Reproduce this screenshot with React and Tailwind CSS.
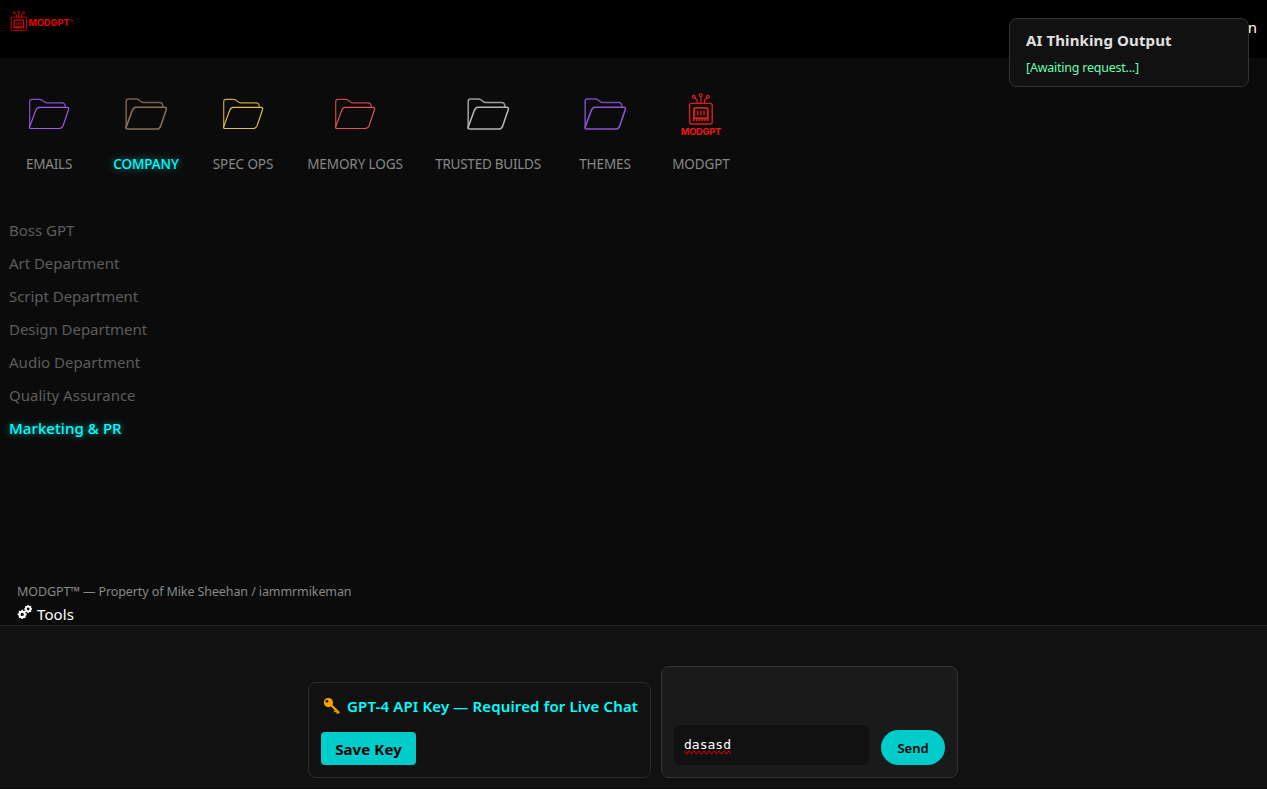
function Folder({ color, bold }) {
  return (
    <svg
      className="size-16 shrink-0"
      viewBox={bold ? '1.1 0.9 62 62' : '0.2 0 64 64'}
      fill="none"
      stroke={color}
      strokeWidth={bold ? 1.5 : 1.2}
      strokeLinejoin="round"
    >
      <path d="M12.9 45.5V19.6Q12.9 17.3 15.2 17.3H22.6Q24.2 17.3 25.2 18.1L27.3 19.8Q28.4 20.8 29.8 20.8H45.4Q48.4 20.8 48.4 24.8" opacity="0.85" />
      <path d="M12.9 44.6L18.8 28.6Q20 25.4 22.4 25.4H50.2Q52.4 25.4 51.7 27.7L46.4 43.4Q45.2 46.5 42.6 46.5H14.4Q12.2 46.5 12.9 44.6Z" />
    </svg>
  );
}

function RobotShapes() {
  return (
    <>
      <rect x="0.8" y="10.8" width="22.6" height="20.6" rx="2" strokeWidth="1.4" />
      <path d="M12 10.5V4.6M8.4 10.5V7.4L5.8 5.1M15.8 10.5V7.4L18.3 5.1" strokeWidth="1.3" />
      <circle cx="12" cy="2.7" r="1.5" strokeWidth="1.2" />
      <circle cx="5" cy="4.2" r="1.4" strokeWidth="1.2" />
      <circle cx="19" cy="4.2" r="1.4" strokeWidth="1.2" />
      <rect x="5.2" y="15.3" width="13.8" height="10.4" rx="1" strokeWidth="1.9" />
      <path d="M9 18.2V22.8M12.1 18.2V22.8M15.2 18.2V22.8" strokeWidth="1.4" />
      <path d="M5 28.4V25.5M7.9 28.4V25.5M10.7 28.4V25.5M13.5 28.4V25.5M16.3 28.4V25.5M19.1 28.4V25.5" strokeWidth="1.7" />
    </>
  );
}

function Gear({ x, y, s }) {
  return (
    <g transform={`translate(${x} ${y}) scale(${s})`}>
      <circle r="3" fill="none" stroke="#fff" strokeWidth="2.3" />
      <path
        d="M0-3.5V-5.2M0 3.5V5.2M-3.5 0H-5.2M3.5 0H5.2M2.5-2.5L3.6-3.6M-2.5-2.5L-3.6-3.6M2.5 2.5L3.6 3.6M-2.5 2.5L-3.6 3.6"
        stroke="#fff"
        strokeWidth="2"
      />
    </g>
  );
}

const tabs = [
  { label: 'EMAILS', color: '#a259ec', width: 'w-16', tracking: 'tracking-[-0.2px]' },
  { label: 'COMPANY', color: '#8d7052', bold: true, width: 'w-[66px]', tracking: 'tracking-[-0.1px]', active: true },
  { label: 'SPEC OPS', color: '#e6bd4e', width: 'w-16', tracking: 'tracking-[-0.1px]' },
  { label: 'MEMORY LOGS', color: '#e65353', width: 'w-24', tracking: 'tracking-[-0.1px]' },
  { label: 'TRUSTED BUILDS', color: '#b5b5b5', bold: true, width: 'w-[106px]', tracking: 'tracking-[-0.25px]' },
  { label: 'THEMES', color: '#8a56d6', bold: true, width: 'w-16', tracking: 'tracking-[-0.1px]' },
  { label: 'MODGPT', robot: true, width: 'w-16', tracking: 'tracking-[-0.1px]' },
];

const departments = [
  { name: 'Boss GPT', tracking: 'tracking-[0px]' },
  { name: 'Art Department', tracking: 'tracking-[-0.04px]' },
  { name: 'Script Department', tracking: 'tracking-[-0.04px]' },
  { name: 'Design Department', tracking: 'tracking-[-0.04px]' },
  { name: 'Audio Department', tracking: 'tracking-[0.03px]' },
  { name: 'Quality Assurance', tracking: 'tracking-[0px]' },
  { name: 'Marketing & PR', tracking: 'tracking-[0.07px]', active: true },
];

export default function App() {
  return (
    <div className="relative flex h-[789px] w-[1267px] flex-col overflow-hidden bg-[#0b0b0b] font-['Noto_Sans',sans-serif] text-white">
      <header className="flex h-[58px] shrink-0 items-start justify-between bg-black px-2.5">
        <div className="flex pt-[10px]">
          <svg className="h-[21px] w-[17px]" viewBox="-1 0 25 32" preserveAspectRatio="none" fill="none" stroke="#dd0000">
            <RobotShapes />
          </svg>
          <span className="ml-[1.5px] pt-[6px] font-['Inter',sans-serif] text-[9px] leading-[12px] font-bold tracking-[0.1px] text-[#f00000]">
            MODGPT<span className="align-[2px] text-[5px]">™</span>
          </span>
        </div>
        <span className="pt-[15px] text-[15px] leading-6">Login</span>
      </header>

      <nav className="flex shrink-0 gap-8 pt-6 pl-[17px]">
        {tabs.map((t) => (
          <div key={t.label} className={`flex shrink-0 flex-col items-center ${t.width}`}>
            {t.robot ? (
              <svg className="size-16" viewBox="0 0 64 64" fill="none" stroke="#dc1c1c">
                <g transform="translate(19.8 10.6)">
                  <RobotShapes />
                </g>
                <text x="32" y="53" textAnchor="middle" textLength="40.5" fill="#ee1818" stroke="none" className="font-['Inter',sans-serif] text-[9.4px] font-bold">
                  MODGPT
                </text>
              </svg>
            ) : (
              <Folder color={t.color} bold={t.bold} />
            )}
            <span
              className={`mt-2 text-[13.5px] leading-5 whitespace-nowrap ${t.tracking} ${
                t.active ? 'font-medium text-[#00ffff] [text-shadow:0_0_8px_#00ffff99]' : 'text-[#888888]'
              }`}
            >
              {t.label}
            </span>
          </div>
        ))}
      </nav>

      <ul className="flex grow flex-col pt-[40px] pl-[9px]">
        {departments.map((d) => (
          <li
            key={d.name}
            className={`h-[33px] text-[15px] leading-[33px] whitespace-nowrap ${d.tracking} ${
              d.active ? 'font-medium text-[#00ffff] [text-shadow:0_0_6px_#00ffff99]' : 'text-[#5d5d5d]'
            }`}
          >
            {d.name}
          </li>
        ))}
      </ul>

      <footer className="flex h-[44px] shrink-0 flex-col pl-[17px]">
        <p className="text-[12.5px] leading-[22px] tracking-[-0.1px] text-[#888888]">MODGPT™ — Property of Mike Sheehan / iammrmikeman</p>
        <div className="flex items-center gap-[5px]">
          <svg className="-mt-1.5 h-4 w-[15px]" viewBox="0 0 15 16">
            <Gear x={5.2} y={10.4} s={0.88} />
            <Gear x={11.2} y={5} s={0.76} />
          </svg>
          <span className="text-[15px] leading-[23px] tracking-[0.1px]">Tools</span>
        </div>
      </footer>

      <section className="mb-px flex h-[163px] shrink-0 items-end justify-center gap-2.5 border-t border-[#222222] bg-[#111111] pr-px pb-[10px]">
        <div className="h-24 w-[343px] rounded-lg border border-[#2a2a2a] px-3 pt-[11px]">
          <h2 className="flex h-6 items-center text-[15px] font-semibold whitespace-nowrap text-[#00ffff]">
            <svg className="mr-[6px] ml-0.5 size-[18px] shrink-0" viewBox="0 0 18 18">
              <path d="M8 8L16.2 16" stroke="#f5a300" strokeWidth="2.2" />
              <path d="M12.6 13.6L11.2 15M14.6 15.4L13.5 16.6" stroke="#f5a300" strokeWidth="1.5" />
              <circle cx="5.4" cy="5.6" r="4.6" fill="#f5a300" />
              <circle cx="3.9" cy="4.2" r="1.3" fill="#111" />
            </svg>
            <span className="tracking-[0.14px]">GPT-4 API Key — Required for Live Chat</span>
          </h2>
          <button className="mt-[14px] block h-[33px] w-[95px] rounded bg-[#00cccc] text-[15px] leading-[35px] font-bold tracking-[0.1px] whitespace-nowrap text-black">
            Save Key
          </button>
        </div>
        <div className="flex h-28 w-[297px] items-end gap-3 rounded-lg border border-[#333333] bg-[#1a1a1a] p-3">
          <div className="h-10 w-[195px] rounded-md bg-[#111111] px-2.5 pt-3 font-['DejaVu_Sans_Mono',monospace] text-[13px] leading-4">
            <span className="relative inline-block">
              dasasd
              <svg className="absolute top-[13px] left-0 h-[5px] w-[47px]" viewBox="0 0 47 5" fill="none" stroke="#d00000" strokeWidth="1.1">
                <path d="M0 1L2.5 4L5 1L7.5 4L10 1L12.5 4L15 1L17.5 4L20 1L22.5 4L25 1L27.5 4L30 1L32.5 4L35 1L37.5 4L40 1L42.5 4L45 1L47 3.5" />
              </svg>
            </span>
          </div>
          <button className="h-[35px] w-16 rounded-full bg-[#00cccc] pt-0.5 text-[13px] font-semibold text-black">Send</button>
        </div>
      </section>

      <aside className="absolute top-[18px] left-[1009px] h-[69px] w-60 rounded-lg border border-[#333333] bg-[#111111] px-4 pt-[9px]">
        <h2 className="text-[15px] leading-6 font-bold tracking-[0.12px] whitespace-nowrap text-[#e0e0e0]">AI Thinking Output</h2>
        <p className="mt-[6px] text-[12.5px] leading-5 tracking-[-0.23px] text-[#66ffb2]">[Awaiting request...]</p>
      </aside>
    </div>
  );
}
